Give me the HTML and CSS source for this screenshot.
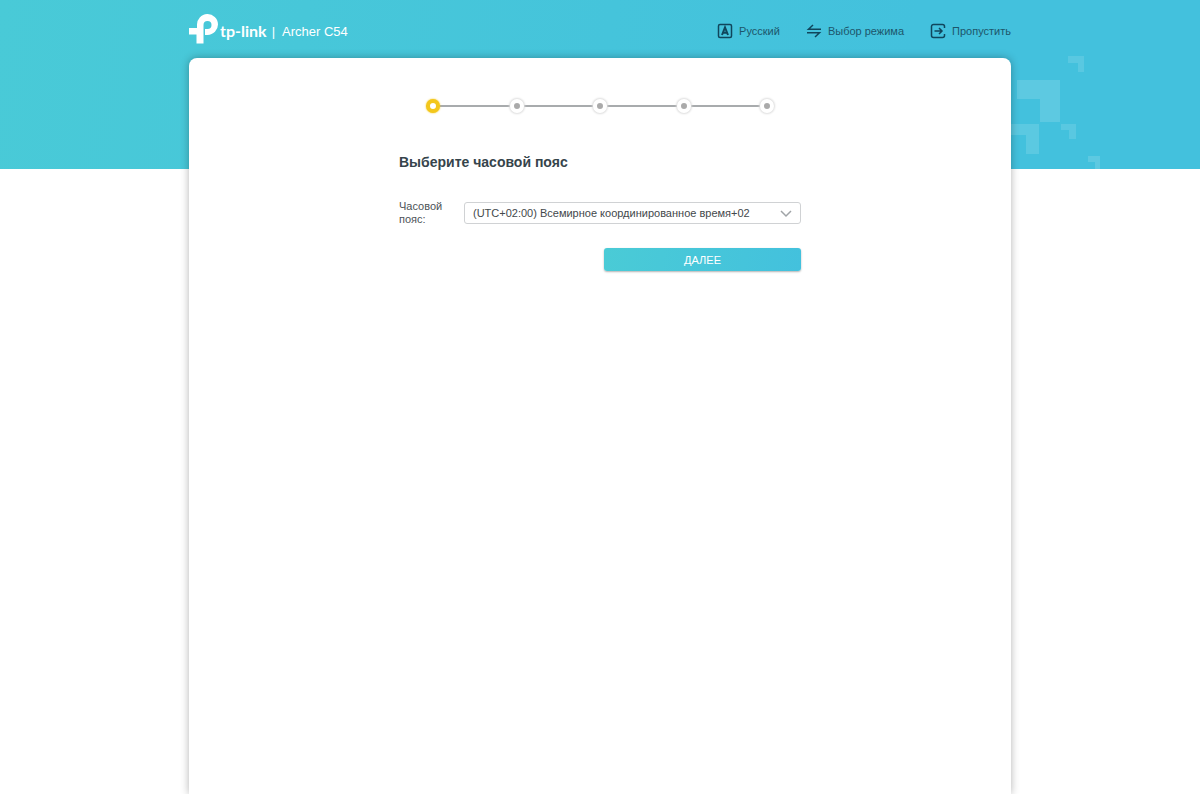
FILE: index.html
```html
<!DOCTYPE html>
<html lang="ru">
<head>
    <meta charset="UTF-8">
    <meta name="viewport" content="width=device-width, initial-scale=1.0">
    <title>Archer C54</title>
    <link rel="stylesheet" href="styles.css">
</head>
<body>
    <div class="banner">
        <svg class="banner-pattern" width="100" height="120" viewBox="0 0 100 120" aria-hidden="true">
            <path d="M57 7h16v16h-6v-9h-10z" opacity=".12"/>
            <path d="M6 31h43v42H29V50H6z" opacity=".14"/>
            <path d="M0 75h28v30H15V86H0z" opacity=".13"/>
            <path d="M50 75h15v15h-7v-9h-8z" opacity=".12"/>
            <path d="M77 107h12v13h-5v-7h-7z" opacity=".14"/>
        </svg>
    </div>

    <div class="page">
        <header class="header">
            <div class="brand">
                <svg class="logo" width="30" height="30" viewBox="0 0 30 30" aria-hidden="true">
                    <path d="M8 14V11A10.500 10.500 0 1 1 18.500 21H16V15H18.500A4 4 0 1 0 14.500 11V29.500H7.500V20.500H0V14z"/>
                </svg>
                <span class="wordmark">tp-link</span>
                <span class="divider">|</span>
                <span class="model">Archer C54</span>
            </div>
            <nav class="tools">
                <a href="#" class="tool">
                    <svg width="16" height="16" viewBox="0 0 16 16" aria-hidden="true">
                        <rect x="1.500" y="1.500" width="13" height="13" rx="1.500"/>
                        <path class="letter" d="M5 12L8 4.500L11 12M6 9.700h4"/>
                    </svg>
                    Русский
                </a>
                <a href="#" class="tool">
                    <svg width="16" height="16" viewBox="0 0 16 16" aria-hidden="true">
                        <path d="M7 2L2.500 6.300H15M1 9.700H13.500L9 14"/>
                    </svg>
                    Выбор режима
                </a>
                <a href="#" class="tool">
                    <svg width="16" height="16" viewBox="0 0 16 16" aria-hidden="true">
                        <path d="M14.500 5V3.500a2 2 0 0 0-2-2h-9a2 2 0 0 0-2 2v9a2 2 0 0 0 2 2h9a2 2 0 0 0 2-2V11M4.500 8H12M9 5l3 3l-3 3"/>
                    </svg>
                    Пропустить
                </a>
            </nav>
        </header>

        <main class="panel">
            <ol class="steps">
                <li class="step active"></li>
                <li class="step"></li>
                <li class="step"></li>
                <li class="step"></li>
                <li class="step"></li>
            </ol>

            <form class="form">
                <h1>Выберите часовой пояс</h1>
                <div class="field">
                    <label for="timezone">Часовой пояс:</label>
                    <div class="select-wrap">
                        <select id="timezone">
                            <option>(UTC+02:00) Всемирное координированное время+02</option>
                        </select>
                        <svg class="chevron" width="12" height="8" viewBox="0 0 12 8" aria-hidden="true">
                            <path d="M1 1l5 5l5-5"/>
                        </svg>
                    </div>
                </div>
                <button type="button" class="btn">ДАЛЕЕ</button>
            </form>
        </main>
    </div>
</body>
</html>
```
FILE: styles.css
```css
* {
    margin: 0;
    padding: 0;
    box-sizing: border-box;
}

body {
    font-family: "Liberation Sans", Arial, sans-serif;
    font-size: 11px;
    color: #4c5357;
    background: #fff;
}

/* Coloured strip behind the header and the top of the panel */
.banner {
    position: absolute;
    top: 0;
    left: 0;
    width: 100%;
    height: 169px;
    overflow: hidden;
    background: linear-gradient(100deg, #49cad7 0%, #43c1dd 75%, #43c1dd 100%);
}

.banner-pattern {
    position: absolute;
    left: calc(50% + 411px);
    bottom: 0;
    fill: #fff;
}

.page {
    position: relative;
    display: flex;
    flex-direction: column;
    width: 100%;
    max-width: 822px;
    min-height: 100vh;
    margin: 0 auto;
}

.header {
    display: flex;
    align-items: center;
    justify-content: space-between;
    height: 58px;
}

.brand {
    display: flex;
    align-items: center;
    color: #fff;
    font-size: 13px;
    padding-top: 4px;
}

.logo {
    fill: #fff;
    margin-bottom: 4px;
}

.wordmark {
    font-family: Lato, sans-serif;
    font-size: 16px;
    font-weight: bold;
    line-height: 20px;
    margin: 0 5px 0 1px;
}

.divider {
    margin-right: 7px;
}

.tools {
    display: flex;
    gap: 26px;
    padding-top: 4px;
}

.tool {
    display: flex;
    align-items: center;
    gap: 6px;
    color: #1d566b;
    text-decoration: none;
}

.tool svg {
    fill: none;
    stroke: #10465c;
    stroke-width: 1.5;
}

.tool .letter {
    stroke-width: 2;
}

.panel {
    flex: 1;
    padding: 41px 20px;
    background: #fff;
    border-radius: 8px 8px 0 0;
    box-shadow: 0 0 8px rgba(0, 0, 0, 0.3);
}

.steps {
    display: flex;
    align-items: center;
    justify-content: space-between;
    max-width: 348px;
    margin: 0 auto 40px;
    list-style: none;
    background: linear-gradient(#a8abad, #a8abad) center / 100% 2px no-repeat;
}

.step {
    width: 14px;
    height: 14px;
    border: 4px solid #fff;
    border-radius: 50%;
    background: #aaa;
    box-shadow: 0 0 2px 1px #ddd;
}

.step.active {
    border-color: #f3c71c;
    background: #fff;
    box-shadow: 0 0 2px #f3c71c;
}

.form {
    display: flex;
    flex-direction: column;
    max-width: 402px;
    margin: 0 auto;
}

h1 {
    font-size: 14px;
    line-height: 18px;
    color: #36444b;
    margin-bottom: 29px;
}

.field {
    display: flex;
    align-items: center;
    margin-bottom: 22px;
}

.field label {
    width: 65px;
    padding-right: 12px;
    line-height: 13px;
}

.select-wrap {
    position: relative;
    flex: 1;
}

select {
    display: block;
    width: 100%;
    height: 22px;
    padding: 0 28px 0 8px;
    font: inherit;
    color: #43484b;
    background: #fff;
    border: 1px solid #d0d2d4;
    border-radius: 3px;
    appearance: none;
}

.chevron {
    position: absolute;
    top: 8px;
    right: 9px;
    fill: none;
    stroke: #a0a4a7;
    stroke-width: 1.5;
    pointer-events: none;
}

.btn {
    align-self: flex-end;
    width: 49%;
    height: 23px;
    font: inherit;
    color: #fff;
    background: linear-gradient(100deg, #4acbd6, #43c1dd);
    border: none;
    border-radius: 3px;
    box-shadow: 0 1px 2px rgba(0, 0, 0, 0.3);
    cursor: pointer;
}
```
